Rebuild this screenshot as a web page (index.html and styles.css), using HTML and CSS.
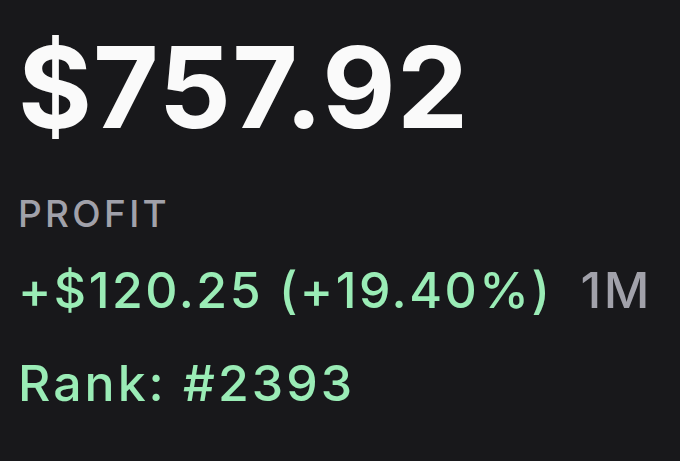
FILE: index.html
```html
<!DOCTYPE html>
<html>
<head>
<meta charset="utf-8">
<link rel="stylesheet" href="styles.css">
</head>
<body>
<main class="card">
  <div class="balance">$757.92</div>
  <div class="label">PROFIT</div>
  <div class="profit-row">
    <span class="profit">+$120.25 (+19.40%)</span>
    <span class="period">1M</span>
  </div>
  <div class="rank">Rank: #2393</div>
</main>
</body>
</html>
```
FILE: styles.css
```css
html, body {
  margin: 0;
  padding: 0;
  background: #18181b;
  height: 100%;
}
.card {
  display: flex;
  flex-direction: column;
  padding: 31px 0 0 18px;
  font-family: Inter, "Liberation Sans", sans-serif;
}
.balance {
  font-size: 113px;
  line-height: 1;
  font-weight: 700;
  letter-spacing: 0.01em;
  color: #fafafa;
}
.label {
  margin-top: 51px;
  font-size: 37px;
  line-height: 1;
  font-weight: 500;
  letter-spacing: 0.09em;
  color: #a1a1aa;
}
.profit-row {
  margin-top: 33px;
  display: flex;
  align-items: baseline;
  gap: 28px;
  font-size: 50px;
  line-height: 1;
  font-weight: 500;
  letter-spacing: 0.05em;
}
.profit { color: #9aecb6; }
.period { color: #a1a1aa; }
.rank {
  margin-top: 43px;
  font-size: 50px;
  line-height: 1;
  font-weight: 500;
  letter-spacing: 0.06em;
  color: #9aecb6;
}
```
